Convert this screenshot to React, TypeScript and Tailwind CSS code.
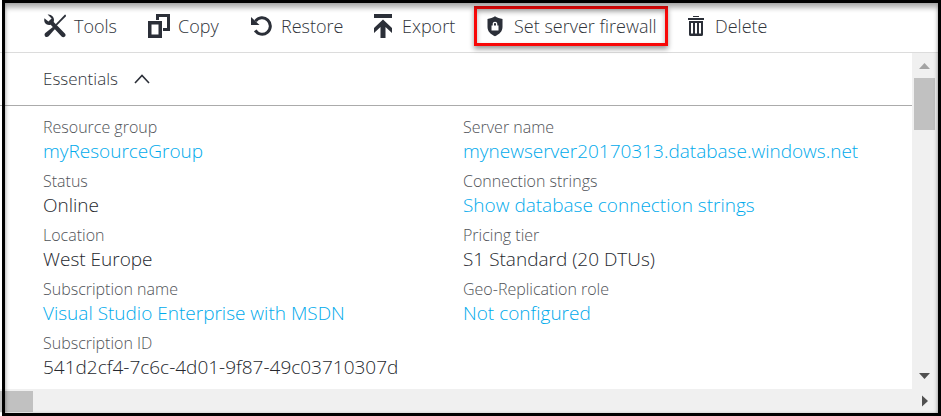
import type { ReactNode } from "react";

function Icon({ children }: { children: ReactNode }) {
  return (
    <svg viewBox="0 0 24 24" className="size-6 shrink-0 text-[#2b2f38]" fill="currentColor" aria-hidden="true">
      {children}
    </svg>
  );
}

const toolsIcon = (
  <Icon>
    <path d="M4.6 0.6 8.6 4.4 5.4 7.6 1.4 4.2C.8 7 1.6 9.2 3.4 10.3c1.500.9 3 .9 4.300.5L18.600 22.600c1 .9 2.400.9 3.300 0 .9-.9.9-2.300 0-3.200L10.700 8c.6-1.800.3-3.900-1-5.400C8.400 1 6.600.3 4.600.6Z" />
    <path d="M22.800 1.100 22 .5 12.600 10.300 13.800 11.600 23 2.300Z" />
    <path d="M10.200 12.700 12.200 14.800 5.600 22.200C4.700 23.200 3.200 23.300 2.200 22.400 1.300 21.400 1.300 20 2.300 19.100Z" />
  </Icon>
);

const copyIcon = (
  <Icon>
    <path d="M9 0H23V17H16V14H20V3H12V6H9Z" />
    <path fillRule="evenodd" d="M1 7H15V24H1ZM4.500 10.500V20.500H11.500V10.500Z" />
  </Icon>
);

const restoreIcon = (
  <Icon>
    <path d="M5.500 7.200A8.200 8.200 0 1 1 5.200 16.400" fill="none" stroke="currentColor" strokeWidth="3" />
    <path d="M1 3V11H9.500Z" />
  </Icon>
);

const exportIcon = (
  <Icon>
    <path d="M3 0H21V4H3Z" />
    <path d="M12 5.500 21 14V19L14.500 13V24H9.500V13L3 19V14Z" />
  </Icon>
);

const firewallIcon = (
  <Icon>
    <path
      fillRule="evenodd"
      d="M12 2.300C9.800 4 7.300 4.700 4.500 4.900V13C4.500 17.500 7.800 20.300 12 22.200 16.200 20.300 19.500 17.500 19.500 13V4.900C16.700 4.700 14.200 4 12 2.300ZM9.700 11.500V10C9.700 6.900 14.300 6.900 14.300 10V11.500H15.500V16.500H8.500V11.500ZM11 11.500H13V10C13 8.500 11 8.500 11 10Z"
    />
  </Icon>
);

const deleteIcon = (
  <Icon>
    <path d="M9 2H15V3H9ZM4 4H20V6H4Z" />
    <path fillRule="evenodd" d="M5 7H19V20.500Q19 22 17.500 22H6.500Q5 22 5 20.500ZM7 9V19.500H9V9ZM11 9V19.500H13V9ZM15 9V19.500H17V9Z" />
  </Icon>
);

const commands = [
  { name: "Tools", icon: toolsIcon },
  { name: "Copy", icon: copyIcon },
  { name: "Restore", icon: restoreIcon },
  { name: "Export", icon: exportIcon },
  { name: "Set server firewall", icon: firewallIcon, marked: true },
  { name: "Delete", icon: deleteIcon },
];

type Field = { label: string; value: string; link?: boolean };

const leftFields: Field[] = [
  { label: "Resource group", value: "myResourceGroup", link: true },
  { label: "Status", value: "Online" },
  { label: "Location", value: "West Europe" },
  { label: "Subscription name", value: "Visual Studio Enterprise with MSDN", link: true },
  { label: "Subscription ID", value: "541d2cf4-7c6c-4d01-9f87-49c03710307d" },
];

const rightFields: Field[] = [
  { label: "Server name", value: "mynewserver20170313.database.windows.net", link: true },
  { label: "Connection strings", value: "Show database connection strings", link: true },
  { label: "Pricing tier", value: "S1 Standard (20 DTUs)" },
  { label: "Geo-Replication role", value: "Not configured", link: true },
];

function FieldList({ fields }: { fields: Field[] }) {
  return (
    <dl className="flex flex-col gap-1.5">
      {fields.map((f) => (
        <div key={f.label}>
          <dt className="text-[16px] leading-6 text-[#505358]">{f.label}</dt>
          <dd className="text-[19px] leading-6 whitespace-nowrap text-[#25282e]">
            {f.link ? (
              <a href="#" className="text-[#00aaec]">
                {f.value}
              </a>
            ) : (
              f.value
            )}
          </dd>
        </div>
      ))}
    </dl>
  );
}

export default function App() {
  return (
    <div className="relative flex min-h-screen flex-col bg-white font-['Open_Sans','Noto_Sans',sans-serif] font-light">
      <header className="grid h-[53px] grid-cols-[104px_103px_121px_103px_210px_auto] items-center justify-start border-b border-[#dcdcdc] pl-[43px]">
        {commands.map((c) => (
          <button
            key={c.name}
            type="button"
            className={
              c.marked
                ? "flex h-10 w-[194px] items-center gap-[7px] border-[3px] border-[#f80808] pl-1.5 text-[18px] whitespace-nowrap text-[#30343b] shadow-[0_3px_5px_rgba(0,0,0,0.4),inset_0_3px_5px_rgba(0,0,0,0.3)]"
                : "flex h-10 items-center gap-[7px] text-[18px] whitespace-nowrap text-[#30343b]"
            }
          >
            {c.icon}
            {c.name}
          </button>
        ))}
      </header>

      <div className="flex flex-1">
        <main className="min-w-0 flex-1">
          <h2 className="h-[53px] border-b border-[#ababab]">
            <button type="button" aria-expanded="true" className="flex h-full items-center gap-4 pl-[43px] text-[17px] text-[#30343b]">
              Essentials
              <svg viewBox="0 0 16 10" className="h-2.5 w-4" fill="none" stroke="#2b2f38" strokeWidth="1.6" aria-hidden="true">
                <path d="M1 9 8 1.500 15 9" />
              </svg>
            </button>
          </h2>
          <div className="grid grid-cols-[420px_auto] justify-start pt-[9px] pl-[43px]">
            <FieldList fields={leftFields} />
            <FieldList fields={rightFields} />
          </div>
        </main>
        <div className="mr-[3px] flex w-[26px] flex-col bg-[#f0f0f0] pr-[3px] pl-0.5">
          <svg viewBox="0 0 21 25" className="h-[25px] w-[21px]" fill="#a3a3a3" aria-hidden="true">
            <path d="M10.500 10 16 16H5Z" />
          </svg>
          <div className="h-[52px] bg-[#c1c1c1]" />
          <svg viewBox="0 0 21 16" className="mt-auto h-4 w-[21px]" fill="#505050" aria-hidden="true">
            <path d="M5 0H16L10.500 6Z" />
          </svg>
        </div>
      </div>

      <div className="mb-[3px] flex h-6 items-center justify-between bg-[#f0f0f0] pr-2.5">
        <div className="h-[21px] w-[33px] bg-[#c1c1c1]" />
        <svg viewBox="0 0 9 12" className="h-3 w-[9px]" fill="#505050" aria-hidden="true">
          <path d="M0 0.500 6 6 0 11.500Z" />
        </svg>
      </div>

      <div className="pointer-events-none absolute inset-y-0 right-0 left-0.5 border-[3px] border-black shadow-[inset_0_5px_5px_rgba(0,0,0,0.3),inset_0_0_3px_rgba(0,0,0,0.2)]" />
    </div>
  );
}
